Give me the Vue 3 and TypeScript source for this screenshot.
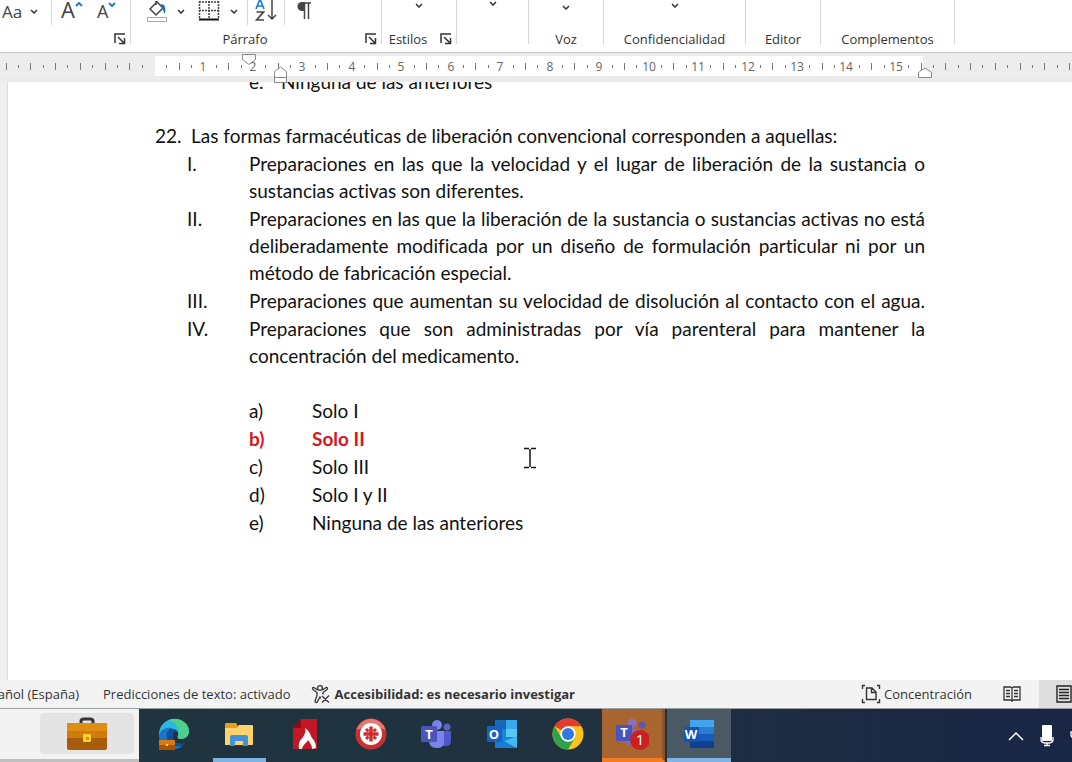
<script setup lang="ts">
interface Item {
  mark: string
  text: string
  strong?: boolean
  full?: boolean
}

const statements: Item[] = [
  { mark: 'I.', text: 'Preparaciones en las que la velocidad y el lugar de liberación de la sustancia o sustancias activas son diferentes.' },
  { mark: 'II.', text: 'Preparaciones en las que la liberación de la sustancia o sustancias activas no está deliberadamente modificada por un diseño de formulación particular ni por un método de fabricación especial.' },
  { mark: 'III.', text: 'Preparaciones que aumentan su velocidad de disolución al contacto con el agua.', full: true },
  { mark: 'IV.', text: 'Preparaciones que son administradas por vía parenteral para mantener la concentración del medicamento.' },
]

const answers: Item[] = [
  { mark: 'a)', text: 'Solo I' },
  { mark: 'b)', text: 'Solo II', strong: true },
  { mark: 'c)', text: 'Solo III' },
  { mark: 'd)', text: 'Solo I y II' },
  { mark: 'e)', text: 'Ninguna de las anteriores' },
]

// Horizontal ruler: origin of the text column and width of one centimetre.
const origin = 154
const cm = 49.46
const lastCm = 15

interface Tick {
  x: number
  tall: boolean
}

const ticks: Tick[] = []
for (let q = -12; q <= 110; q++) {
  const whole = q % 4 === 0
  const numbered = whole && q >= 0 && q <= lastCm * 4
  if (numbered) continue
  ticks.push({ x: Math.round(origin + (q * cm) / 4), tall: q % 2 === 0 })
}
const numbers = Array.from({ length: lastCm }, (_, i) => ({
  n: i + 1,
  x: Math.round(origin + (i + 1) * cm),
}))
</script>

<template>
  <div class="app">
    <header class="ribbon">
      <section class="group g-font">
        <div class="tools">
          <button class="tool case" aria-label="Cambiar mayúsculas y minúsculas">
            <span class="aa">Aa</span>
            <svg class="chev" viewBox="0 0 8 5"><path d="M1 1l3 3 3-3" /></svg>
          </button>
          <i class="bar"></i>
          <button class="tool grow" aria-label="Aumentar tamaño">
            <span>A</span>
            <svg class="caret" viewBox="0 0 8 5"><path d="M1 4l3-3 3 3" /></svg>
          </button>
          <button class="tool shrink" aria-label="Disminuir tamaño">
            <span>A</span>
            <svg class="caret" viewBox="0 0 8 5"><path d="M1 1l3 3 3-3" /></svg>
          </button>
        </div>
        <div class="caption">
          <span class="name"></span>
          <button class="launch" aria-label="Fuente">
            <svg viewBox="0 0 12 12"><path d="M1 10V1h10M4 4l6 6M10.500 5v5.500H5" /></svg>
          </button>
        </div>
      </section>

      <section class="group g-par">
        <div class="tools">
          <button class="tool fill" aria-label="Sombreado">
            <svg width="22" height="21" viewBox="0 0 22 21">
              <path d="M10 0v4M4 8l7-7 6 6-7 7z" fill="#fff" stroke="#444" stroke-width="1.500" />
              <path d="M15 3c4 0 5 4 4 10-1-1-2-4-3-6z" fill="#1f6fb8" />
              <rect x="1.500" y="16.500" width="19" height="4" fill="#fff" stroke="#aaa" />
            </svg>
            <svg class="chev" viewBox="0 0 8 5"><path d="M1 1l3 3 3-3" /></svg>
          </button>
          <button class="tool borders" aria-label="Bordes">
            <svg width="22" height="21" viewBox="0 0 22 21">
              <path d="M1.500 0v17M20.500 0v17M11 0v17M1 9.500h20M1 1h20" fill="none" stroke="#444" stroke-width="1.500" stroke-dasharray="2 1" />
              <path d="M1 18.500h20" stroke="#111" stroke-width="2" />
            </svg>
            <svg class="chev" viewBox="0 0 8 5"><path d="M1 1l3 3 3-3" /></svg>
          </button>
          <i class="bar"></i>
          <button class="tool sort" aria-label="Ordenar">
            <svg width="22" height="22" viewBox="0 0 22 22" fill="none" stroke-width="1.700">
              <path d="M1 9l4-10 4 10M2.500 6h5" stroke="#1f7fcf" />
              <path d="M1.500 12h7l-7 8h7.500" stroke="#444" />
              <path d="M17 0v19M13 15l4 4 4-4" stroke="#444" stroke-width="1.500" />
            </svg>
          </button>
          <i class="bar"></i>
          <button class="tool pil" aria-label="Mostrar todo">
            <svg width="14" height="18" viewBox="0 0 14 18">
              <path d="M6 1h8M7.500 1v16M11.500 1v16" fill="none" stroke="#444" stroke-width="1.500" />
              <path d="M8 0H5a4.500 4.500 0 0 0 0 9h3z" fill="#444" />
            </svg>
          </button>
        </div>
        <div class="caption">
          <span class="name">Párrafo</span>
          <button class="launch" aria-label="Configuración de párrafo">
            <svg viewBox="0 0 12 12"><path d="M1 10V1h10M4 4l6 6M10.500 5v5.500H5" /></svg>
          </button>
        </div>
      </section>

      <section class="group g-small">
        <div class="tools mid">
          <svg class="chev" viewBox="0 0 8 5"><path d="M1 1l3 3 3-3" /></svg>
        </div>
        <div class="caption">
          <span class="name">Estilos</span>
          <button class="launch" aria-label="Estilos">
            <svg viewBox="0 0 12 12"><path d="M1 10V1h10M4 4l6 6M10.500 5v5.500H5" /></svg>
          </button>
        </div>
      </section>

      <section class="group g-edit">
        <div class="tools mid high"><svg class="chev" viewBox="0 0 8 5"><path d="M1 1l3 3 3-3" /></svg></div>
        <div class="caption"></div>
      </section>
      <section class="group g-small">
        <div class="tools mid low"><svg class="chev" viewBox="0 0 8 5"><path d="M1 1l3 3 3-3" /></svg></div>
        <div class="caption"><span class="name">Voz</span></div>
      </section>
      <section class="group g-conf">
        <div class="tools mid"><svg class="chev" viewBox="0 0 8 5"><path d="M1 1l3 3 3-3" /></svg></div>
        <div class="caption"><span class="name">Confidencialidad</span></div>
      </section>
      <section class="group g-small">
        <div class="tools"></div>
        <div class="caption"><span class="name">Editor</span></div>
      </section>
      <section class="group g-add">
        <div class="tools"></div>
        <div class="caption"><span class="name">Complementos</span></div>
      </section>
    </header>

    <div class="ruler">
      <svg width="100%" height="30" aria-hidden="true">
        <rect x="155" y="3" width="768" height="20" fill="#fff" />
        <rect x="0" y="23" width="100%" height="6" fill="#ebebeb" />
        <rect
          v-for="t in ticks"
          :key="t.x"
          :x="t.x"
          :y="t.tall ? 10 : 12"
          width="1"
          :height="t.tall ? 7 : 3"
          fill="#777"
        />
        <text v-for="m in numbers" :key="m.n" :x="m.x" y="18" text-anchor="middle">{{ m.n }}</text>
        <path d="M242.500 1.500h13v5l-6.500 5-6.500-5z" fill="#fff" fill-opacity="0.600" stroke="#888" />
        <path d="M274.500 20.500v-2l6-4.500 6 4.500v11h-12zM274.500 24.500h12" fill="#fff" stroke="#888" />
        <path d="M918.500 24.500v-5l6.500-4.500 6.500 4.500v5z" fill="#fff" stroke="#888" />
      </svg>
    </div>

    <main class="desk">
      <article class="page">
        <div class="column">
          <p class="row previous"><span class="mark">e.</span><span>Ninguna de las anteriores</span></p>
          <p class="row question">
            <span class="mark">22.</span>
            <span>Las formas farmacéuticas de liberación convencional corresponden a aquellas:</span>
          </p>
          <ol class="statements">
            <li v-for="s in statements" :key="s.mark" class="row">
              <span class="mark">{{ s.mark }}</span>
              <span class="body" :class="{ full: s.full }">{{ s.text }}</span>
            </li>
          </ol>
          <ol class="answers">
            <li v-for="a in answers" :key="a.mark" class="row" :class="{ right: a.strong }">
              <span class="mark">{{ a.mark }}</span>
              <span>{{ a.text }}</span>
            </li>
          </ol>
        </div>
        <svg class="ibeam" width="14" height="22" viewBox="0 0 14 22">
          <path d="M1 1.500h5M8 1.500h5M7 2v18M1 20.500h5M8 20.500h5" fill="none" stroke="#111" stroke-width="1.500" />
        </svg>
      </article>
    </main>

    <footer class="status">
      <span class="lang">Español (España)</span>
      <span class="pred">Predicciones de texto: activado</span>
      <button class="acc">
        <svg width="20" height="20" viewBox="0 0 20 20" fill="none" stroke="#333" stroke-width="1.300">
          <circle cx="9" cy="4" r="2.400" />
          <path d="M6.500 6L3 3.500C1.500 3 1 5 2 5.500L6 8.500v3L4 17c0 2 2 2 2.500.5L9 13l1 1.500M11.500 6L15 3.500c1.500-.5 2 1.500 1 2L12 8.500v2M11 12l7 6.500M18 11.500l-7 7" />
        </svg>
        <b>Accesibilidad: es necesario investigar</b>
      </button>
      <button class="focus">
        <svg width="20" height="20" viewBox="0 0 20 20" fill="none" stroke="#333" stroke-width="1.400">
          <path d="M4 1.500H1.500V5M16 1.500h2.500V5M1.500 15v3.500H4M18.500 15v3.500H16" />
          <path d="M5.500 4H11l4 4v7.500H5.500zM10.500 4v4.500H15" />
        </svg>
        <span>Concentración</span>
      </button>
      <button class="view" aria-label="Modo de lectura">
        <svg width="18" height="18" viewBox="0 0 18 18" fill="none" stroke="#333" stroke-width="1.300">
          <path d="M9 3L7.500 2H1v13h6.500L9 16l1.500-1H17V2h-6.500zM9 3v14M3 5.500h4M3 8.500h4M3 11.500h4M11 5.500h4M11 8.500h4M11 11.500h4" />
        </svg>
      </button>
      <button class="view active" aria-label="Diseño de impresión">
        <svg width="16" height="18" viewBox="0 0 16 18" fill="none" stroke="#222" stroke-width="1.400">
          <path d="M1 1h14v16H1zM3 4.500h10M3 7.500h10M3 10.500h10M3 13.500h10" />
        </svg>
      </button>
    </footer>

    <nav class="taskbar">
      <div class="host">
        <button class="case-btn" aria-label="Maletín">
          <svg width="42" height="34" viewBox="0 0 42 34">
            <path d="M15 7V4q0-2 3-2h6q3 0 3 2v3" fill="none" stroke="#333" stroke-width="3" />
            <rect x="1" y="6" width="40" height="27" rx="2" fill="#a65c0a" />
            <path d="M1 8q0-2 2-2h36q2 0 2 2v13H1z" fill="#cf7c0c" />
            <path d="M1 8q0-2 2-2h36q2 0 2 2v6H1z" fill="#de8c12" />
            <rect x="17" y="17" width="8" height="8" rx="1" fill="#ffcf2e" />
            <path d="M20 20h3v3h-3z" fill="#d79508" />
          </svg>
        </button>
      </div>
      <div class="apps">
        <button aria-label="Edge">
          <svg width="34" height="34" viewBox="0 0 34 34">
            <path d="M2 17A15 15 0 0 1 17 2c9 0 15 6 15 12 0 5-4 8-8 8-3 0-4-2-3-3 1-2 0-7-6-7-7 0-13 3-13 9z" fill="#2bb7e0" />
            <path d="M12 3c10-4 20 3 20 11 0 5-4 8-8 8-3 0-4-2-3-3 2-5 1-12-9-16z" fill="#4fd08a" />
            <path d="M2 20c0-6 6-10 12-9-5 4-5 11-1 15 4 4 9 4 13 2-5 7-24 6-24-8z" fill="#1976c9" />
            <path d="M14 11c-6 4-5 13 0 16 5 4 11 2 14-1-8 2-13-3-12-8 0-3 2-4 3-4z" fill="#124f98" />
            <rect x="2" y="23" width="16" height="10" rx="1" fill="#d87b13" />
            <path d="M2 28h16v5H2z" fill="#a8520c" /><path d="M9 27h2v2H9z" fill="#ffe06a" />
          </svg>
        </button>
        <button class="open" aria-label="Explorador de archivos">
          <svg width="30" height="26" viewBox="0 0 30 26">
            <path d="M1 3q0-1 1-1h10l2 3v4H1z" fill="#e2a021" />
            <path d="M1 7h12l2-3h13q1 0 1 1v18q0 1-1 1H1z" fill="#fbd46c" />
            <path d="M6 25V16q0-2 2-2h14q2 0 2 2v9h-5v-5h-8v5z" fill="#3f93d6" />
          </svg>
        </button>
        <button aria-label="Lector PDF">
          <svg width="26" height="32" viewBox="0 0 26 32">
            <path d="M1 10L9 1h16v30H1z" fill="#c51623" />
            <path d="M1 10L9 1v9z" fill="#8d0c18" />
            <path d="M7 31c-1-8 2-9 4-12 2-3 3-6 2-9 5 3 5 7 7 10 2 2 4 5 4 10l-4 1c0-4-2-6-4-9-1 3-5 4-6 9z" fill="#fff" />
          </svg>
        </button>
        <button aria-label="Red">
          <svg width="32" height="32" viewBox="0 0 32 32">
            <circle cx="16" cy="16" r="15.500" fill="#c93030" />
            <path d="M1.500 12a15 15 0 0 1 29 0q-14-7-29 0z" fill="#e8776f" />
            <circle cx="16" cy="16" r="11" fill="#fff" />
            <path d="M16 7v18M7 16h18" stroke="#c93030" stroke-width="3.500" />
            <path d="M13 7.500h6M13 24.500h6M7.500 13v6M24.500 13v6" stroke="#fff" stroke-width="2" />
            <path d="M11 11l2.500 2.500M21 11l-2.500 2.500M11 21l2.500-2.500M21 21l-2.500-2.500" stroke="#c93030" stroke-width="3" />
          </svg>
        </button>
        <button aria-label="Teams">
          <svg width="32" height="30" viewBox="0 0 32 30">
            <circle cx="17" cy="6" r="5" fill="#7b83eb" /><circle cx="27" cy="8" r="3.500" fill="#5a62c8" />
            <path d="M22 12h9v10q0 5-5 5h-4z" fill="#5059c9" /><path d="M9 12h15v11q0 6-7 6t-8-6z" fill="#7b83eb" />
            <rect x="1" y="7" width="16" height="16" rx="1" fill="#4b53bc" />
            <text x="9" y="20" text-anchor="middle" class="logo">T</text>
          </svg>
        </button>
        <button aria-label="Outlook">
          <svg width="32" height="30" viewBox="0 0 32 30">
            <path d="M9 1h22v26q0 2-2 2H9z" fill="#1a83d8" /><path d="M9 1h11v9H9z" fill="#1769b5" />
            <path d="M20 1h11v9H20z" fill="#35a9ec" /><path d="M20 10h11v8H20z" fill="#56c8f5" />
            <path d="M9 18l11 5 11-6v10q0 2-2 2H9z" fill="#1b7cd0" /><path d="M31 17v12L18 22z" fill="#42b7ef" />
            <rect x="1" y="7" width="15" height="16" rx="1" fill="#0f65c0" />
            <text x="8" y="20" text-anchor="middle" class="logo">O</text>
          </svg>
        </button>
        <button aria-label="Chrome">
          <svg width="32" height="32" viewBox="0 0 32 32">
            <circle cx="16" cy="16" r="15.500" fill="#fbc31a" />
            <path d="M16 16L2.600 8.200A15.500 15.500 0 0 1 29.400 8.200H16z" fill="#e33b2e" />
            <path d="M2.600 8.200A15.500 15.500 0 0 0 16 31.500l6.700-11.600L16 16 9 19z" fill="#2da14c" />
            <circle cx="16" cy="16" r="7.700" fill="#fff" /><circle cx="16" cy="16" r="6" fill="#2f78e4" />
          </svg>
        </button>
        <button class="alert" aria-label="Teams, 1 notificación">
          <svg width="34" height="34" viewBox="0 0 34 34">
            <circle cx="17" cy="6" r="4.500" fill="#8a6fc0" /><circle cx="27" cy="8" r="3.500" fill="#5f56a8" />
            <path d="M9 12h16v11q0 5-8 5t-8-5z" fill="#7a6cc0" />
            <rect x="1" y="8" width="16" height="16" rx="1" fill="#4b53bc" />
            <text x="9" y="20" text-anchor="middle" class="logo">T</text>
            <circle cx="25" cy="23" r="10" fill="#cc1f1f" />
            <text x="25" y="28" text-anchor="middle" class="count">1</text>
          </svg>
        </button>
        <button class="open current" aria-label="Word">
          <svg width="32" height="30" viewBox="0 0 32 30">
            <path d="M7 1h24v8H7z" fill="#41a5ee" /><path d="M7 8h24v8H7z" fill="#2b7cd3" />
            <path d="M7 15h24v7H7z" fill="#185abd" /><path d="M7 22h24v7H7z" fill="#103f91" />
            <rect x="1" y="8" width="15" height="15" rx="1" fill="#1652b0" />
            <text x="8" y="20" text-anchor="middle" class="logo">W</text>
          </svg>
        </button>
      </div>
      <div class="tray">
        <button aria-label="Mostrar iconos ocultos">
          <svg width="16" height="10" viewBox="0 0 16 10"><path d="M1 9l7-7 7 7" fill="none" stroke="#fff" stroke-width="1.500" /></svg>
        </button>
        <button aria-label="Micrófono">
          <svg width="14" height="22" viewBox="0 0 14 22">
            <rect x="2" y="0" width="10" height="16" rx="1" fill="#fff" />
            <path d="M1 12v3q0 2 3 3h6q3-1 3-3v-3M7 18v2M4 20.500h6" fill="none" stroke="#fff" stroke-width="1.300" />
          </svg>
        </button>
        <button aria-label="Alimentación">
          <svg width="14" height="18" viewBox="0 0 14 18"><path d="M3 1v4M9 1v4M1 5h11v3q0 4-5 4t-6-4zM7 12v5" fill="none" stroke="#fff" stroke-width="1.300" /></svg>
        </button>
      </div>
    </nav>
  </div>
</template>

<style>
body {
  margin: 0;
}
</style>

<style scoped>
.app {
  display: flex;
  flex-direction: column;
  height: 100vh;
  overflow: hidden;
  background: #f0f0f0;
  font-family: 'Open Sans', 'Noto Sans', sans-serif;
  font-size: 13px;
  color: #333;
}
button {
  display: flex;
  align-items: center;
  justify-content: center;
  padding: 0;
  border: 0;
  background: none;
  color: inherit;
  font: inherit;
}
svg {
  flex: none;
  display: block;
}

.ribbon {
  display: flex;
  flex: none;
  height: 52px;
  background: #fff;
  border-bottom: 1px solid #c6c6c6;
  overflow: hidden;
}
.group {
  box-sizing: border-box;
  flex: none;
  display: flex;
  flex-direction: column;
  height: 44px;
  border-right: 1px solid #d6d6d6;
}
.g-font { width: 131px; }
.g-par { width: 251px; }
.g-small { width: 75px; }
.g-edit { width: 72px; }
.g-conf { width: 142px; }
.g-add { width: 134px; }
.tools {
  display: flex;
  height: 26px;
}
.mid {
  justify-content: center;
}
.mid .chev { margin-top: 3px; }
.high .chev { margin-top: 1px; }
.low .chev { margin-top: 5px; }
.caption {
  display: flex;
  align-items: center;
  height: 26px;
  margin-bottom: -8px;
}
.name {
  flex: 1;
  text-align: center;
  white-space: nowrap;
}
.launch {
  margin: 0 4px 0 6px;
}
.launch svg {
  width: 12px;
  height: 12px;
  fill: none;
  stroke: #333;
  stroke-width: 1.500;
}
.chev {
  width: 8px;
  height: 5px;
  fill: none;
  stroke: #333;
  stroke-width: 1.500;
}
.caret {
  width: 8px;
  height: 5px;
  fill: none;
  stroke: #1f7fcf;
  stroke-width: 2;
}
.bar {
  width: 1px;
  height: 25px;
  background: #d6d6d6;
}
.tool {
  height: 22px;
  color: #444;
}
.case { width: 51px; justify-content: flex-start; gap: 8px; padding-left: 2px; }
.aa { font-size: 17px; }
.grow { margin-left: 9px; font-size: 22px; line-height: 22px; align-items: flex-start; }
.grow span { margin-top: -2px; }
.shrink { margin-left: 14px; font-size: 18px; line-height: 22px; align-items: flex-start; }
.shrink .caret, .grow .caret { margin-top: 2px; }
.fill { margin-left: 15px; gap: 9px; }
.borders { margin-left: 13px; gap: 10px; }
.borders + .bar { margin-left: 9px; }
.sort { width: 36px; }
.pil { margin-left: 12px; }

.ruler {
  flex: none;
  height: 29px;
  background: #ededed;
  border-bottom: 1px solid #e3e3e3;
  box-sizing: border-box;
  position: relative;
  z-index: 1;
}
.ruler text {
  font-size: 12px;
  fill: #666;
}

.desk {
  flex: 1;
  min-height: 0;
  display: flex;
  padding-left: 7px;
  background: #efefef;
}
.page {
  position: relative;
  flex: 1;
  border-left: 1px solid #dcdcdc;
  background: #fff;
  overflow: hidden;
  padding-left: 147px;
  color: #111;
  font-family: Lato, sans-serif;
  font-size: 19px;
  line-height: 27px;
  font-variant-ligatures: none;
}
.column {
  max-width: 770px;
  margin-top: -14px;
}
.row {
  display: flex;
  margin: 0;
}
.mark { flex: none; }
.previous { padding-left: 94px; margin-bottom: 27px; }
.previous .mark { width: 32px; }
.question .mark { width: 36px; }
.statements, .answers {
  display: flex;
  flex-direction: column;
  gap: 1px;
  list-style: none;
  margin: 1px 0 28px;
  padding: 0 0 0 32px;
}
.statements .mark { width: 62px; }
.body { flex: 1; text-align: justify; }
.full { text-align-last: justify; }
.answers { padding-left: 94px; margin: 0; }
.answers .mark { width: 63px; }
.right { color: #d9161c; font-weight: 700; }
.ibeam {
  position: absolute;
  left: 515px;
  top: 365px;
}

.status {
  flex: none;
  display: flex;
  align-items: center;
  height: 28px;
  background: #f3f3f3;
  border-bottom: 1px solid #9aa0a2;
  white-space: nowrap;
  color: #333;
}
.lang {
  width: 79px;
  display: flex;
  justify-content: flex-end;
}
.pred { margin-left: 24px; }
.acc { margin-left: 20px; gap: 4px; }
.focus { margin-left: auto; gap: 3px; }
.view { height: 28px; width: 52px; margin-left: 14px; }
.view.active { width: 33px; margin-left: 1px; justify-content: flex-end; background: #dedede; }

.taskbar {
  flex: none;
  display: flex;
  height: 53px;
  background: linear-gradient(90deg, #20363f, #1f3040 60%, #1a2744 90%);
}
.host {
  box-sizing: border-box;
  width: 139px;
  padding: 4px 5px 5px 40px;
  background: #f3f3f3;
  border-bottom: 3px solid #bfbfbf;
}
.case-btn {
  width: 94px;
  height: 41px;
  border-radius: 4px;
  background: #e4e4e4;
}
.apps {
  display: grid;
  grid-template-columns: repeat(9, 1fr);
  gap: 2px;
  width: 589px;
  margin-left: 3px;
}
.apps button {
  box-sizing: border-box;
  border-bottom: 4px solid transparent;
}
.apps .open { border-bottom-color: #7fb5e6; margin: 0 5px; }
.apps .current { background: #4a5963; margin: 0; }
.apps .alert { background: #a8652f; border-bottom-color: #f47b20; border-right: 3px solid #8e5427; }
.logo { font-size: 13px; font-weight: 700; fill: #fff; }
.count { font-size: 15px; fill: #fff; }
.tray {
  display: flex;
  margin-left: auto;
  gap: 16px;
  margin-right: -12px;
}
</style>
